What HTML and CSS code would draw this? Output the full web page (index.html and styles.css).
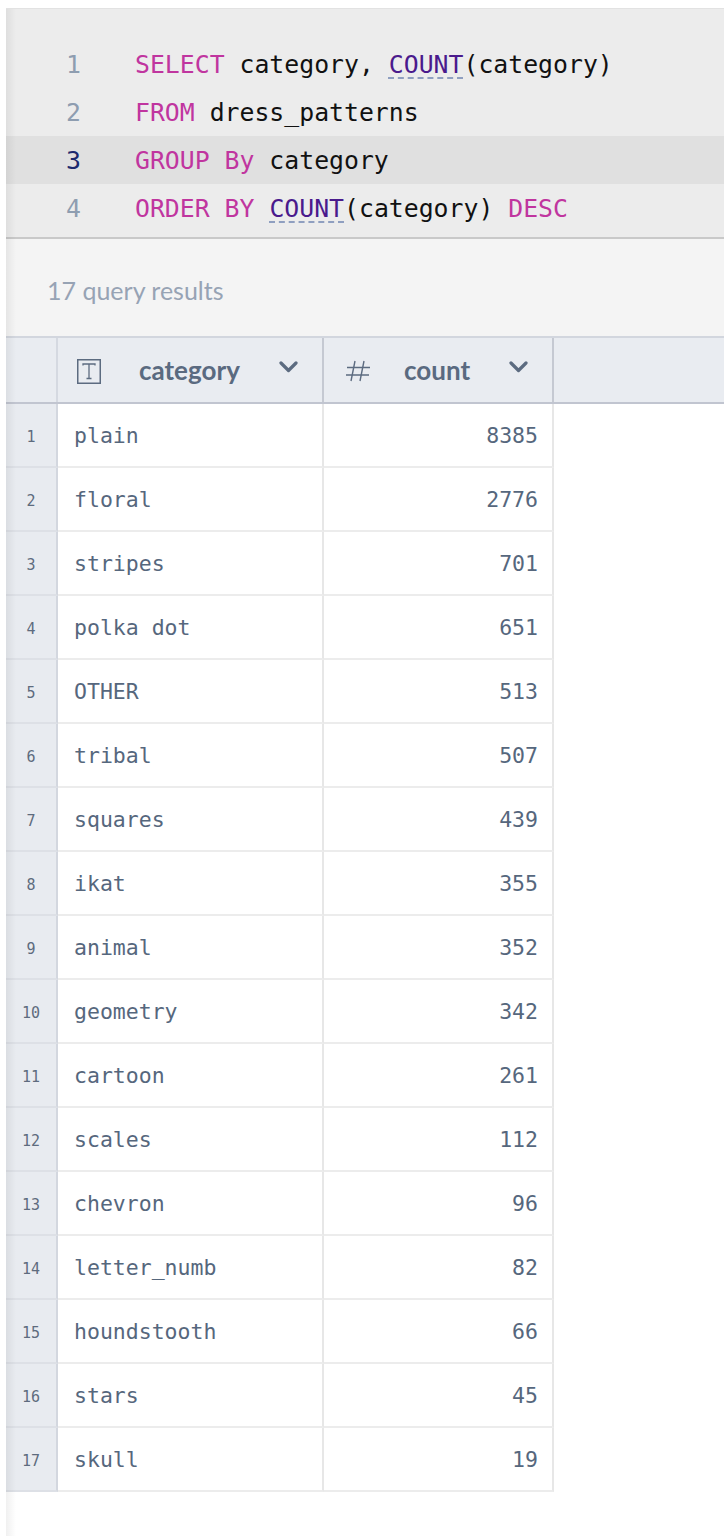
FILE: index.html
```html
<!DOCTYPE html>
<html>
<head>
<meta charset="utf-8">
<link rel="stylesheet" href="styles.css">
</head>
<body>
<div class="app">
  <div class="editor">
    <div class="line"><span class="ln">1</span><span class="code"><span class="kw">SELECT</span> category, <span class="fn">COUNT</span>(category)</span></div>
    <div class="line"><span class="ln">2</span><span class="code"><span class="kw">FROM</span> dress_patterns</span></div>
    <div class="line active"><span class="ln">3</span><span class="code"><span class="kw">GROUP By</span> category</span></div>
    <div class="line"><span class="ln">4</span><span class="code"><span class="kw">ORDER BY</span> <span class="fn">COUNT</span>(category) <span class="kw">DESC</span></span></div>
  </div>
  <div class="results-bar">17 query results</div>
  <div class="grid-wrap">
    <div class="thead">
      <div class="th th-num"></div>
      <div class="th th-col">
        <svg class="ico-t" width="24" height="25" viewBox="0 0 24 25"><rect x="0.75" y="0.75" width="22.5" height="23.5" fill="none" stroke="#5c6b80" stroke-width="1.5"/><path d="M6 6.5 V5 H18 V6.5 M12 5 V19.5 M9.5 19.5 H14.5" fill="none" stroke="#5c6b80" stroke-width="1.3"/></svg>
        <span class="th-label">category</span>
        <svg class="chev" width="19" height="12" viewBox="0 0 19 12"><path d="M2 2 L9.5 9.5 L17 2" fill="none" stroke="#5c6b80" stroke-width="3.2" stroke-linecap="round" stroke-linejoin="round"/></svg>
      </div>
      <div class="th th-col">
        <svg class="ico-hash" width="26" height="22" viewBox="0 0 26 22"><path d="M10 1 L6 21 M19 1 L15 21 M2 7.5 H25 M1 15 H24" fill="none" stroke="#5c6b80" stroke-width="1.4"/></svg>
        <span class="th-label">count</span>
        <svg class="chev" width="19" height="12" viewBox="0 0 19 12"><path d="M2 2 L9.5 9.5 L17 2" fill="none" stroke="#5c6b80" stroke-width="3.2" stroke-linecap="round" stroke-linejoin="round"/></svg>
      </div>
      <div class="th th-fill"></div>
    </div>
    <div class="tbody">
      <div class="row"><div class="rn">1</div><div class="cell">plain</div><div class="cell num">8385</div></div>
      <div class="row"><div class="rn">2</div><div class="cell">floral</div><div class="cell num">2776</div></div>
      <div class="row"><div class="rn">3</div><div class="cell">stripes</div><div class="cell num">701</div></div>
      <div class="row"><div class="rn">4</div><div class="cell">polka dot</div><div class="cell num">651</div></div>
      <div class="row"><div class="rn">5</div><div class="cell">OTHER</div><div class="cell num">513</div></div>
      <div class="row"><div class="rn">6</div><div class="cell">tribal</div><div class="cell num">507</div></div>
      <div class="row"><div class="rn">7</div><div class="cell">squares</div><div class="cell num">439</div></div>
      <div class="row"><div class="rn">8</div><div class="cell">ikat</div><div class="cell num">355</div></div>
      <div class="row"><div class="rn">9</div><div class="cell">animal</div><div class="cell num">352</div></div>
      <div class="row"><div class="rn">10</div><div class="cell">geometry</div><div class="cell num">342</div></div>
      <div class="row"><div class="rn">11</div><div class="cell">cartoon</div><div class="cell num">261</div></div>
      <div class="row"><div class="rn">12</div><div class="cell">scales</div><div class="cell num">112</div></div>
      <div class="row"><div class="rn">13</div><div class="cell">chevron</div><div class="cell num">96</div></div>
      <div class="row"><div class="rn">14</div><div class="cell">letter_numb</div><div class="cell num">82</div></div>
      <div class="row"><div class="rn">15</div><div class="cell">houndstooth</div><div class="cell num">66</div></div>
      <div class="row"><div class="rn">16</div><div class="cell">stars</div><div class="cell num">45</div></div>
      <div class="row"><div class="rn">17</div><div class="cell">skull</div><div class="cell num">19</div></div>
    </div>
  </div>
</div>
</body>
</html>
```

FILE: styles.css
```css
html, body {
  margin: 0;
  padding: 0;
  background: #ffffff;
}
body {
  width: 724px;
  height: 1536px;
  overflow: hidden;
  font-family: "Lato", "Liberation Sans", sans-serif;
}
.app {
  position: relative;
  margin-left: 6px;
  margin-top: 8px;
  height: 1528px;
  border-top: 1px solid #e2e2e2;
}
.app::before {
  content: "";
  position: absolute;
  left: 0;
  top: 0;
  bottom: 0;
  width: 10px;
  background: linear-gradient(to right, rgba(0,0,0,0.06), rgba(0,0,0,0));
  pointer-events: none;
  z-index: 2;
}
.editor {
  background: #ececec;
  padding-top: 31px;
  padding-bottom: 5px;
  border-bottom: 2px solid #c9c9c9;
  font-family: "DejaVu Sans Mono", "Liberation Mono", monospace;
  font-size: 24.8px;
}
.line {
  display: flex;
  align-items: center;
  height: 48px;
}
.line.active {
  background: #e0e0e0;
}
.ln {
  box-sizing: border-box;
  width: 129px;
  padding-left: 60px;
  color: #8e9db0;
}
.active .ln {
  color: #1c2a6e;
}
.code {
  color: #111111;
  white-space: pre;
}
.kw {
  color: #c0359f;
}
.fn {
  color: #4a1a8c;
  text-decoration: underline dashed #8f9fc0;
  text-decoration-thickness: 2px;
  text-underline-offset: 5px;
}
.results-bar {
  height: 97px;
  box-sizing: border-box;
  background: #f4f4f4;
  display: flex;
  align-items: center;
  padding-left: 41px;
  padding-top: 4px;
  color: #97a3b4;
  font-size: 25px;
}
.thead {
  display: grid;
  grid-template-columns: 52px 266px 230px 1fr;
  height: 68px;
  box-sizing: border-box;
  background: #e9ecf1;
  border-top: 2px solid #d2d6de;
  border-bottom: 2px solid #c1c5d0;
}
.th {
  box-sizing: border-box;
  border-right: 2px solid #c5c9d2;
  display: flex;
  align-items: center;
}
.th-num {
  border-right-color: #d5d9e1;
}
.th-fill {
  border-right: none;
}
.th-col {
  padding-left: 19px;
  padding-right: 24px;
  color: #5a6a80;
}
.ico-t {
  flex: none;
  margin-top: 2px;
}
.ico-hash {
  flex: none;
  margin-left: 2px;
  margin-top: 2px;
}
.th-label {
  flex: 1;
  font-weight: 700;
  font-size: 26px;
  margin-left: 38px;
}
.th-col:nth-child(3) .th-label {
  margin-left: 33px;
}
.chev {
  flex: none;
  margin-bottom: 6px;
}
.tbody {
  width: 548px;
}
.row {
  display: grid;
  grid-template-columns: 52px 266px 230px;
  height: 64px;
}
.rn {
  box-sizing: border-box;
  background: #e8ebf0;
  border-right: 2px solid #d3d7df;
  border-bottom: 2px solid #dde0e6;
  display: flex;
  align-items: center;
  justify-content: center;
  font-family: "DejaVu Sans Mono", "Liberation Mono", monospace;
  font-size: 15px;
  color: #5e6b7e;
  padding-top: 3px;
}
.cell {
  box-sizing: border-box;
  border-right: 2px solid #e7e7e7;
  border-bottom: 2px solid #ececec;
  display: flex;
  align-items: center;
  padding-left: 16px;
  padding-right: 14px;
  font-family: "DejaVu Sans Mono", "Liberation Mono", monospace;
  font-size: 21.5px;
  color: #56677d;
  white-space: pre;
}
.cell.num {
  justify-content: flex-end;
}
```
